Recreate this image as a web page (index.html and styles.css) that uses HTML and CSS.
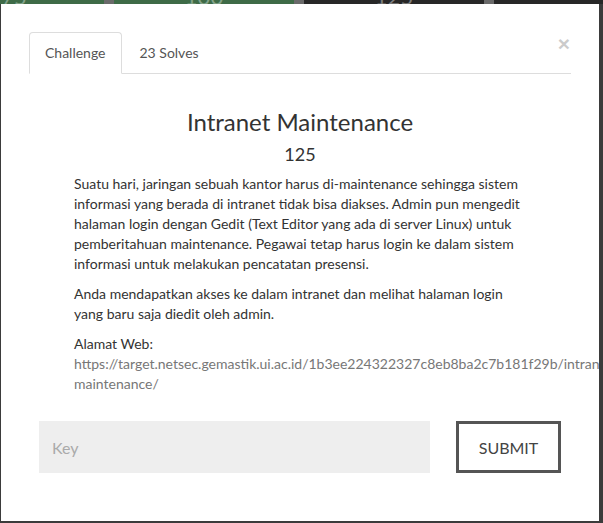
FILE: index.html
```html
<!DOCTYPE html>
<html lang="id">
<head>
<meta charset="utf-8">
<title>Intranet Maintenance</title>
<link rel="stylesheet" href="styles.css">
</head>
<body>
<div class="board">
  <div class="tile solved">75</div>
  <div class="tile solved">100</div>
  <div class="tile">125</div>
  <div class="tile"></div>
</div>

<div class="modal">
  <div class="nav">
    <div class="tab active">Challenge</div>
    <div class="tab">23 Solves</div>
    <button class="close" type="button">&times;</button>
  </div>

  <h3 class="title">Intranet Maintenance</h3>
  <h4 class="value">125</h4>

  <div class="desc">
    <p>Suatu hari, jaringan sebuah kantor harus di-maintenance sehingga sistem informasi yang berada di intranet tidak bisa diakses. Admin pun mengedit halaman login dengan Gedit (Text Editor yang ada di server Linux) untuk pemberitahuan maintenance. Pegawai tetap harus login ke dalam sistem informasi untuk melakukan pencatatan presensi.</p>
    <p>Anda mendapatkan akses ke dalam intranet dan melihat halaman login yang baru saja diedit oleh admin.</p>
    <p>Alamat Web:<br><a class="link" href="#">https://target.netsec.gemastik.ui.ac.id/1b3ee224322327c8eb8ba2c7b181f29b/intranet-maintenance/</a></p>
  </div>

  <form class="answer">
    <input class="key" type="text" placeholder="Key">
    <button class="submit" type="button">Submit</button>
  </form>
</div>
</body>
</html>
```

FILE: styles.css
```css
html, body {
  margin: 0;
  height: 100%;
}

body {
  background: #3b3b3b;
  overflow: hidden;
  font-family: Lato, "Open Sans", sans-serif;
}

.board {
  display: flex;
  gap: 10px;
  margin-left: -76px;
  margin-top: -26px;
  background: #6a6a6a;
  width: 900px;
}

.tile {
  flex: 0 0 180px;
  height: 30px;
  box-sizing: border-box;
  padding-top: 8px;
  line-height: 30px;
  font-size: 22px;
  text-align: center;
  color: #7d7d7d;
  background: #272727;
  overflow: hidden;
}

.tile.solved {
  background: #3e6b47;
  color: #83a38a;
}

.modal {
  position: fixed;
  top: 4px;
  left: 1px;
  width: 598px;
  height: 517px;
  box-sizing: border-box;
  padding: 28px 28px 48px;
  background: #fff;
  overflow: hidden;
  color: #333;
}

.nav {
  display: flex;
  align-items: flex-start;
  border-bottom: 1px solid #ddd;
  height: 41px;
}

.tab {
  padding: 10px 15px;
  margin-right: 2px;
  line-height: 20px;
  font-size: 14px;
  color: #555;
  border: 1px solid transparent;
  border-radius: 4px 4px 0 0;
}

.tab.active {
  border-color: #ddd #ddd transparent;
  background: #fff;
}

.close {
  margin-left: auto;
  margin-right: 1px;
  margin-top: 1px;
  padding: 0;
  border: 0;
  background: none;
  font-family: "Liberation Sans", Arial, sans-serif;
  font-size: 21px;
  font-weight: bold;
  line-height: 21px;
  color: #000;
  opacity: 0.2;
}

.title {
  margin: 35px 0 0;
  font-size: 24px;
  font-weight: 400;
  line-height: 26px;
  text-align: center;
  color: #333;
}

.value {
  margin: 9px 0 0;
  font-size: 18px;
  font-weight: 400;
  line-height: 20px;
  text-align: center;
  color: #333;
}

.desc {
  margin: 10px 45px 0;
  font-size: 14px;
  line-height: 20px;
  color: #333;
}

.desc p {
  margin: 0 0 10px;
}

.link {
  color: #777;
  text-decoration: none;
}

.answer {
  display: flex;
  justify-content: space-between;
  margin: 27px 10px 0;
}

.key {
  width: 391px;
  height: 52px;
  box-sizing: border-box;
  padding: 0 13px;
  border: 0;
  background: #eee;
  font-family: Lato, "Open Sans", sans-serif;
  font-size: 16px;
  color: #333;
  outline: none;
}

.key::placeholder {
  color: #aaa;
}

.submit {
  width: 105px;
  height: 52px;
  box-sizing: border-box;
  border: 3px solid #555;
  background: #fff;
  font-family: Lato, "Open Sans", sans-serif;
  font-size: 16px;
  text-transform: uppercase;
  color: #444;
  padding: 0;
}
```
